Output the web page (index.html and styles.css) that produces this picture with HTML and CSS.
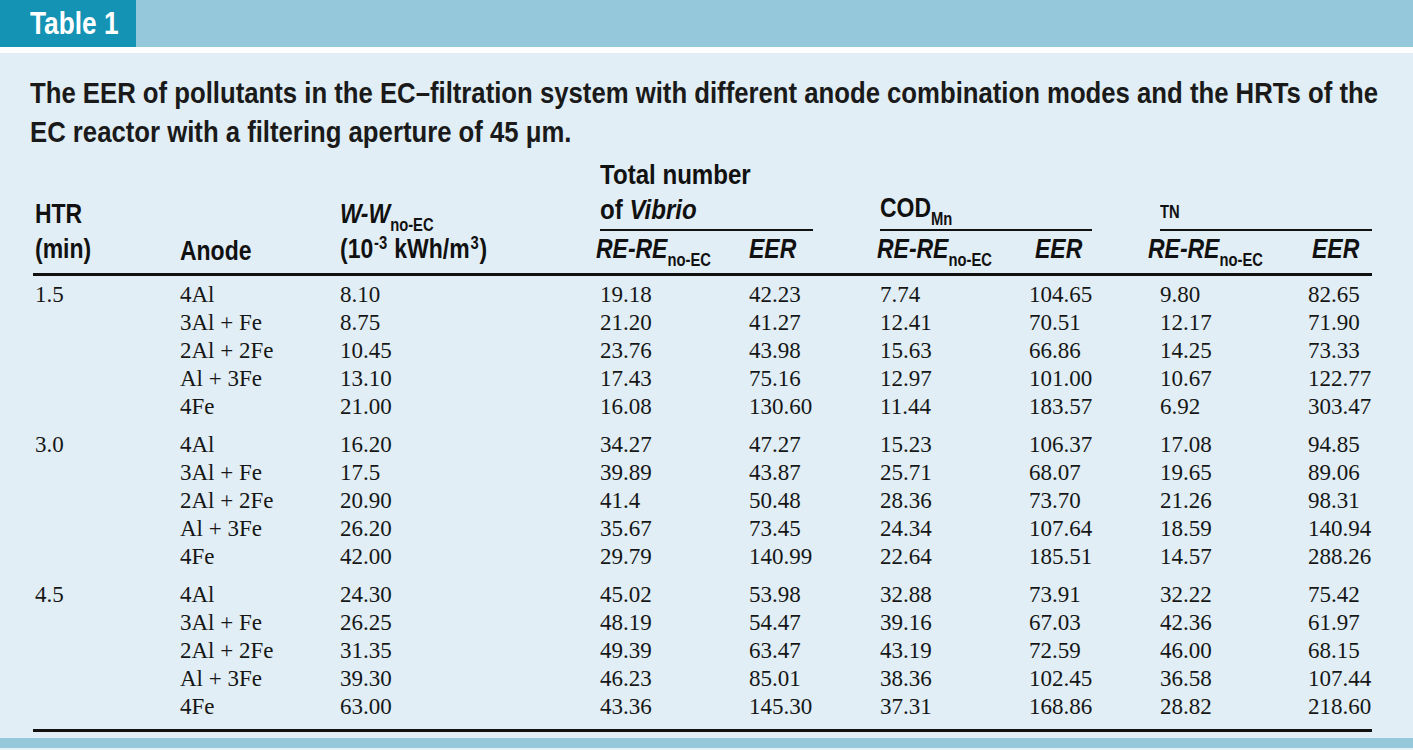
FILE: index.html
```html
<!DOCTYPE html>
<html lang="en">
<head>
<meta charset="utf-8">
<title>Table 1</title>
<link rel="stylesheet" href="styles.css">
</head>
<body>
<div class="page">
  <div class="topbar"><div class="tab"><span class="cn">Table 1</span></div></div>
  <div class="panel">
    <p class="caption">The EER of pollutants in the EC–filtration system with different anode combination modes and the HRTs of the<br>EC reactor with a filtering aperture of 45 μm.</p>
    <table class="data">
      <colgroup>
        <col class="c1"><col class="c2"><col class="c3"><col class="c4"><col class="c5"><col class="c6"><col class="c7"><col class="c8"><col class="c9">
      </colgroup>
      <thead>
        <tr class="hrow1">
          <th rowspan="2" class="span2"><span class="cn">HTR<br>(min)</span></th>
          <th rowspan="2" class="span2"><span class="cn anode">Anode</span></th>
          <th rowspan="2" class="span2"><span class="cn"><i>W-W</i><sub>no-EC</sub><br>(10<sup>-3</sup> kWh/m<sup>3</sup>)</span></th>
          <th colspan="2"><div class="grp g-vib"><span class="cn wide">Total number<br>of <i>Vibrio</i></span></div></th>
          <th colspan="2"><div class="grp g-cod"><span class="cn">COD<sub>Mn</sub></span></div></th>
          <th colspan="2"><div class="grp g-tn"><span class="cn tn">TN</span></div></th>
        </tr>
        <tr class="hrow2">
          <th><span class="cn re-vib"><i>RE-RE</i><sub>no-EC</sub></span></th>
          <th><span class="cn"><i>EER</i></span></th>
          <th><span class="cn re-cod"><i>RE-RE</i><sub>no-EC</sub></span></th>
          <th><span class="cn eer-cod"><i>EER</i></span></th>
          <th><span class="cn re-tn"><i>RE-RE</i><sub>no-EC</sub></span></th>
          <th><span class="cn eer-tn"><i>EER</i></span></th>
        </tr>
      </thead>
      <tbody class="grp1">
        <tr><td>1.5</td><td>4Al</td><td>8.10</td><td>19.18</td><td>42.23</td><td>7.74</td><td>104.65</td><td>9.80</td><td>82.65</td></tr>
        <tr><td></td><td>3Al + Fe</td><td>8.75</td><td>21.20</td><td>41.27</td><td>12.41</td><td>70.51</td><td>12.17</td><td>71.90</td></tr>
        <tr><td></td><td>2Al + 2Fe</td><td>10.45</td><td>23.76</td><td>43.98</td><td>15.63</td><td>66.86</td><td>14.25</td><td>73.33</td></tr>
        <tr><td></td><td>Al + 3Fe</td><td>13.10</td><td>17.43</td><td>75.16</td><td>12.97</td><td>101.00</td><td>10.67</td><td>122.77</td></tr>
        <tr><td></td><td>4Fe</td><td>21.00</td><td>16.08</td><td>130.60</td><td>11.44</td><td>183.57</td><td>6.92</td><td>303.47</td></tr>
      </tbody>
      <tbody class="grpn">
        <tr><td>3.0</td><td>4Al</td><td>16.20</td><td>34.27</td><td>47.27</td><td>15.23</td><td>106.37</td><td>17.08</td><td>94.85</td></tr>
        <tr><td></td><td>3Al + Fe</td><td>17.5</td><td>39.89</td><td>43.87</td><td>25.71</td><td>68.07</td><td>19.65</td><td>89.06</td></tr>
        <tr><td></td><td>2Al + 2Fe</td><td>20.90</td><td>41.4</td><td>50.48</td><td>28.36</td><td>73.70</td><td>21.26</td><td>98.31</td></tr>
        <tr><td></td><td>Al + 3Fe</td><td>26.20</td><td>35.67</td><td>73.45</td><td>24.34</td><td>107.64</td><td>18.59</td><td>140.94</td></tr>
        <tr><td></td><td>4Fe</td><td>42.00</td><td>29.79</td><td>140.99</td><td>22.64</td><td>185.51</td><td>14.57</td><td>288.26</td></tr>
      </tbody>
      <tbody class="grpn last">
        <tr><td>4.5</td><td>4Al</td><td>24.30</td><td>45.02</td><td>53.98</td><td>32.88</td><td>73.91</td><td>32.22</td><td>75.42</td></tr>
        <tr><td></td><td>3Al + Fe</td><td>26.25</td><td>48.19</td><td>54.47</td><td>39.16</td><td>67.03</td><td>42.36</td><td>61.97</td></tr>
        <tr><td></td><td>2Al + 2Fe</td><td>31.35</td><td>49.39</td><td>63.47</td><td>43.19</td><td>72.59</td><td>46.00</td><td>68.15</td></tr>
        <tr><td></td><td>Al + 3Fe</td><td>39.30</td><td>46.23</td><td>85.01</td><td>38.36</td><td>102.45</td><td>36.58</td><td>107.44</td></tr>
        <tr><td></td><td>4Fe</td><td>63.00</td><td>43.36</td><td>145.30</td><td>37.31</td><td>168.86</td><td>28.82</td><td>218.60</td></tr>
      </tbody>
    </table>
  </div>
  <div class="bottombar"></div>
</div>
</body>
</html>
```

FILE: styles.css
```css
html, body {
  margin: 0;
  padding: 0;
  background: #ffffff;
}

.page {
  width: 1413px;
  height: 750px;
  overflow: hidden;
  background: #e6f1f6;
  font-family: "Liberation Sans", Arial, sans-serif;
  color: #141414;
}

/* condensed look: Arial Narrow is Arial at 82% width */
.cn {
  display: inline-block;
  transform: scaleX(0.82);
  transform-origin: 0 100%;
  white-space: nowrap;
}

.cn.wide {
  transform: scaleX(0.86);
}

.topbar {
  height: 47px;
  background: #95c8db;
  display: flex;
}

.tab {
  width: 136px;
  background: #1593b5;
  color: #ffffff;
  font-weight: bold;
  font-size: 32px;
  line-height: 47px;
  padding-left: 30px;
  box-sizing: border-box;
  white-space: nowrap;
}

.panel {
  border-top: 6px solid #ffffff;
  height: 691px;
  background: #e1eef5;
  padding: 20px 0 0 30px;
  box-sizing: border-box;
}

.caption {
  margin: 0;
  font-size: 30px;
  line-height: 39px;
  font-weight: bold;
  color: #1a1a1a;
  width: 1620px;
  white-space: nowrap;
  transform: scaleX(0.857);
  transform-origin: 0 0;
}

.data {
  margin-left: 3px;
  margin-top: 4px;
  width: 1339px;
  table-layout: fixed;
  border-collapse: collapse;
}

.c1 { width: 145px; }
.c2 { width: 160px; }
.c3 { width: 260px; }
.c4 { width: 149px; }
.c5 { width: 131px; }
.c6 { width: 149px; }
.c7 { width: 131px; }
.c8 { width: 148px; }
.c9 { width: 66px; }

.data th {
  text-align: left;
  font-weight: bold;
  font-size: 28px;
  line-height: 35px;
  padding: 0 0 0 2px;
  vertical-align: bottom;
  white-space: nowrap;
  color: #111111;
}

.data sub {
  font-size: 18px;
  vertical-align: -8px;
  line-height: 0;
  font-style: normal;
}

.data sup {
  font-size: 18px;
  vertical-align: 9px;
  line-height: 0;
  padding: 0 1px;
}

.span2 {
  border-bottom: 3px solid #111111;
  padding-bottom: 7px !important;
}

.anode {
  position: relative;
  top: 2px;
}

.grp {
  border-bottom: 2px solid #111111;
  padding-bottom: 4px;
}

.g-vib { width: 213px; }
.g-cod { width: 212px; }
.g-tn { width: 212px; }

.g-vib .cn {
  position: relative;
  top: 2px;
}

.tn {
  font-size: 18px;
  line-height: 30px;
  position: relative;
  top: 2px;
}

.hrow2 th {
  border-bottom: 3px solid #111111;
  padding-bottom: 7px;
}

.re-vib { margin-left: -4px; }
.re-cod { margin-left: -3px; }
.eer-cod { margin-left: 6px; }
.re-tn { margin-left: -12px; }
.eer-tn { margin-left: 4px; }

.data td {
  font-family: "Liberation Serif", "Times New Roman", serif;
  font-size: 23px;
  line-height: 28px;
  padding: 0 0 0 2px;
  color: #161616;
  white-space: nowrap;
  vertical-align: bottom;
}

.grp1 tr:first-child td {
  padding-top: 5px;
}

.grpn tr:first-child td {
  padding-top: 10px;
}

.last tr:last-child td {
  padding-bottom: 8px;
  border-bottom: 3px solid #111111;
}

.bottombar {
  height: 10px;
  background: #95c8db;
}
```
